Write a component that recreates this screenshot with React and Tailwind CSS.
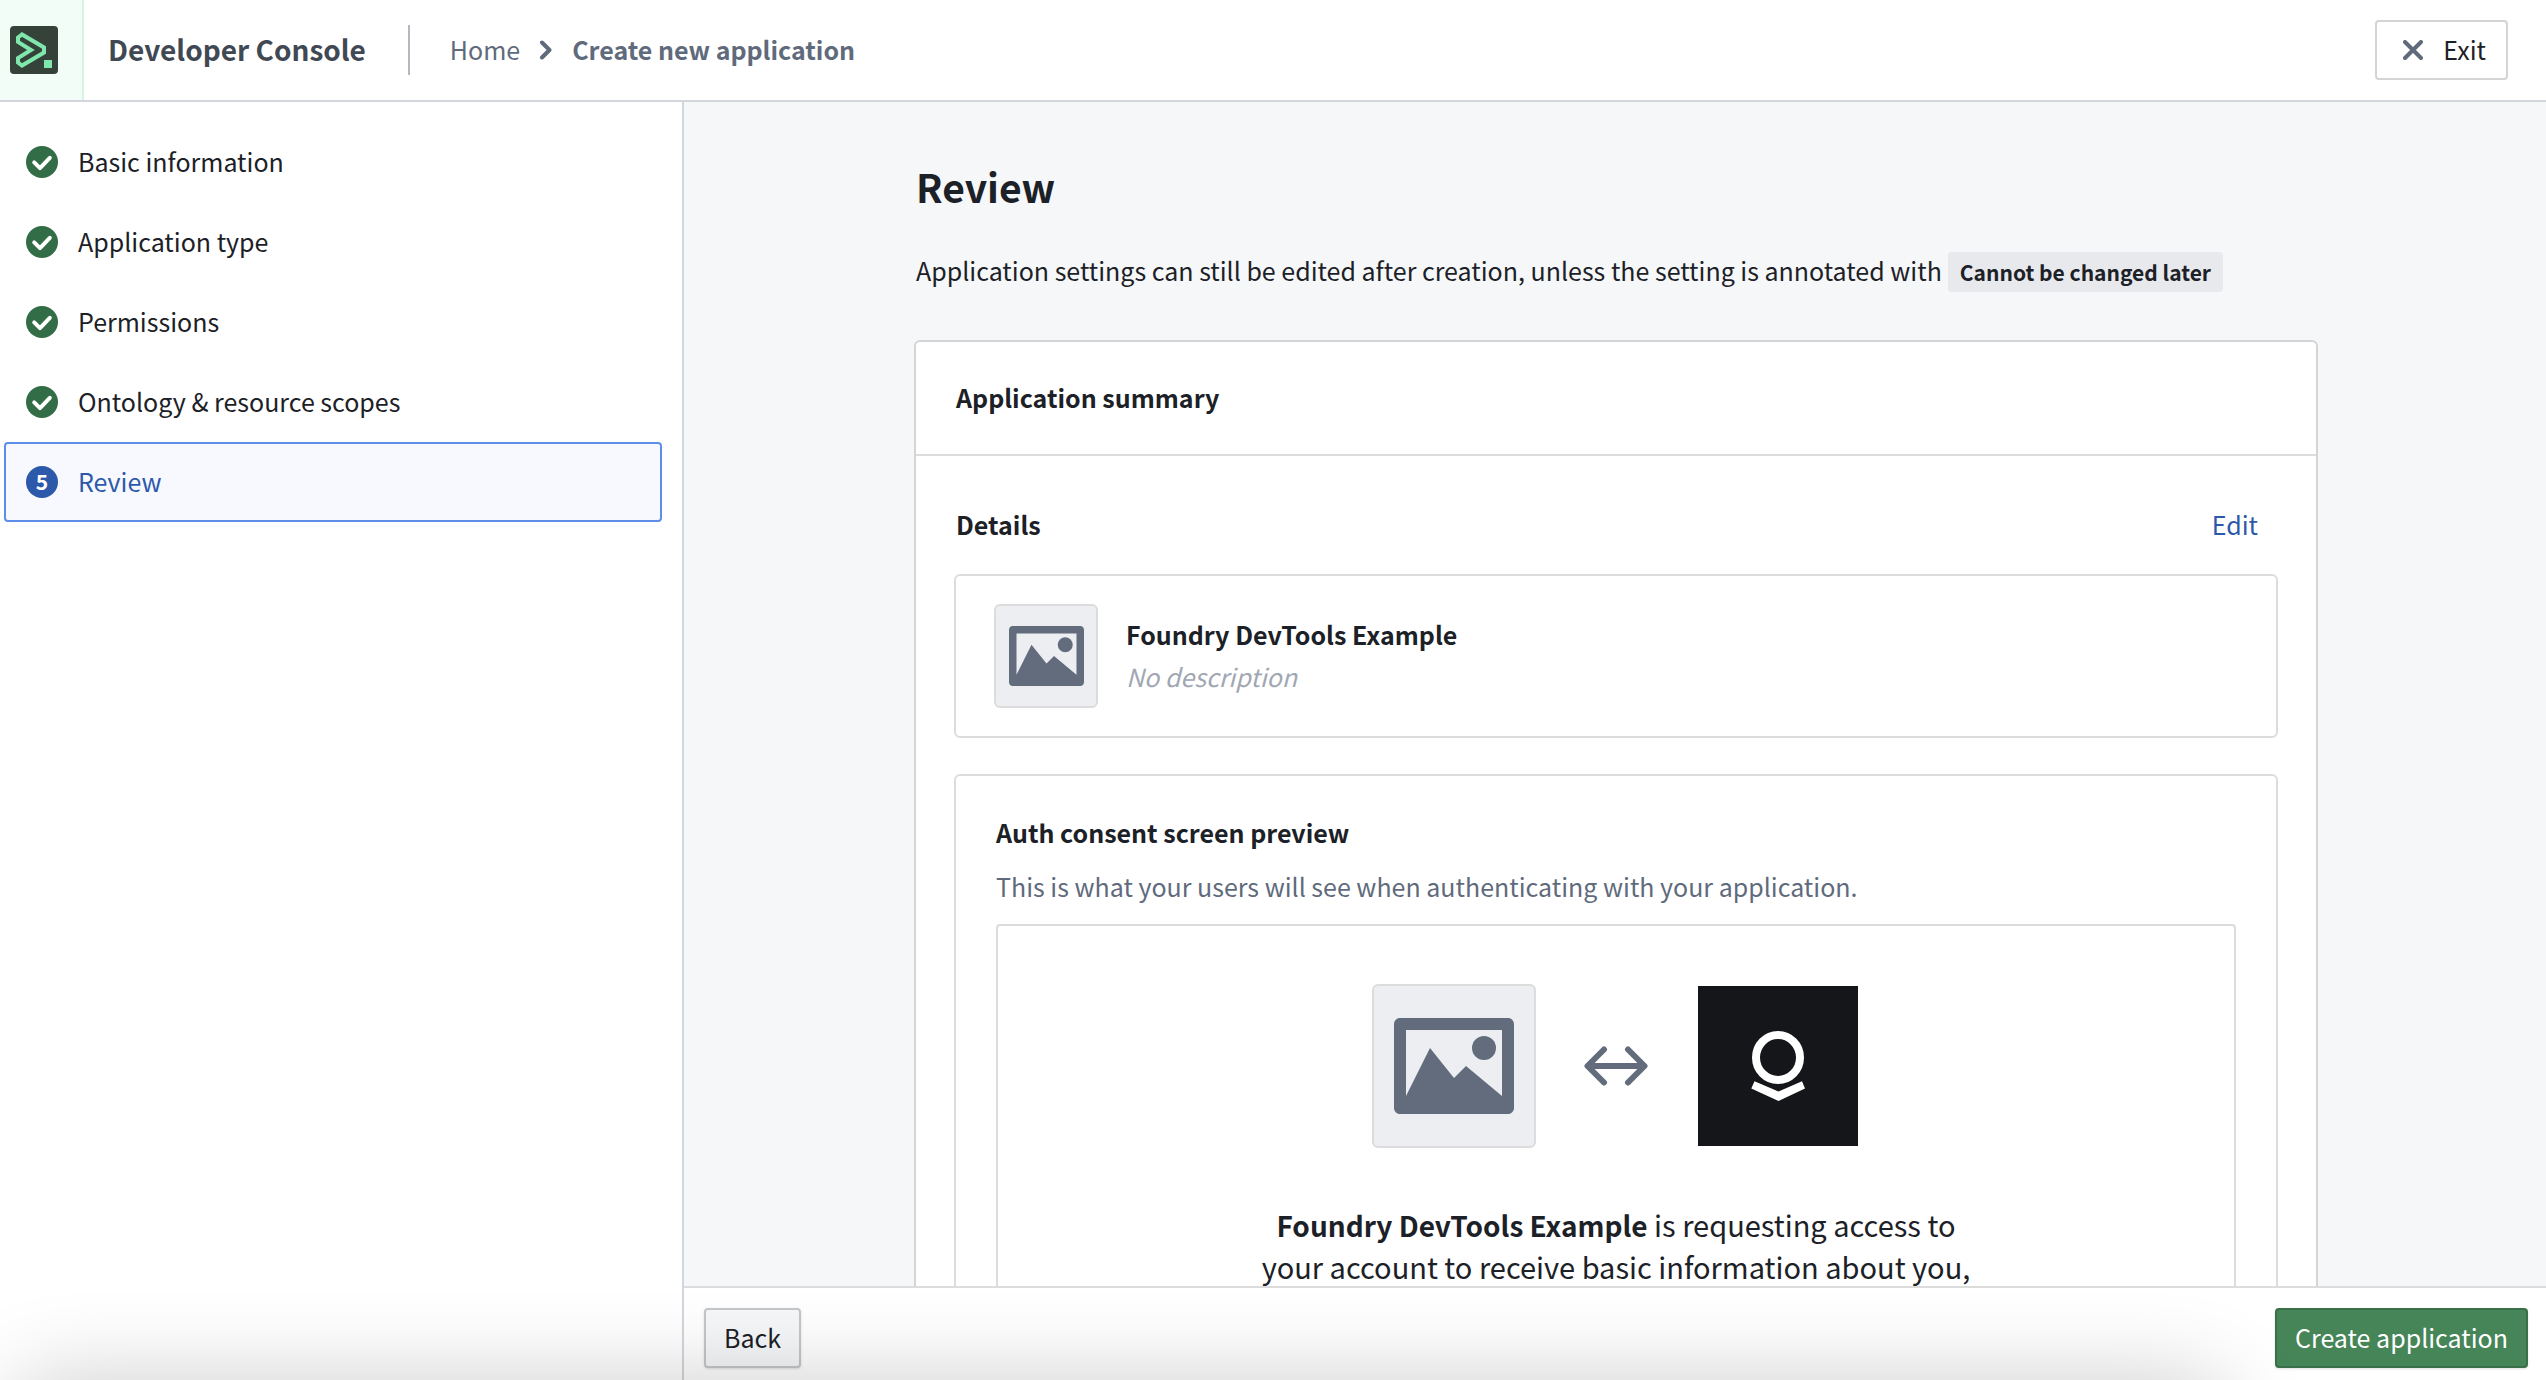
const steps = [
  { label: "Basic information", done: true },
  { label: "Application type", done: true },
  { label: "Permissions", done: true },
  { label: "Ontology & resource scopes", done: true },
  { label: "Review", done: false },
];

function ConsoleLogo() {
  return (
    <svg viewBox="0 0 48 48" className="size-12" aria-hidden="true">
      <rect width="48" height="48" rx="4" fill="#354239" />
      <path d="M8 11.500L12 8.500L34 21.500V26.500L12 39.500L8 36.500V32L21 24L8 16z" fill="none" stroke="#7fe7ac" strokeWidth="4" />
      <rect x="34" y="34" width="8" height="8" fill="#7fe7ac" />
    </svg>
  );
}

function DoneIcon() {
  return (
    <svg viewBox="0 0 16 16" className="size-8 shrink-0" aria-hidden="true">
      <circle cx="8" cy="8" r="8" fill="#336d47" />
      <path d="M4.100 8.200L7 11.100L11.900 5.900" fill="none" stroke="#fff" strokeWidth="2" strokeLinecap="round" strokeLinejoin="round" />
    </svg>
  );
}

function MediaIcon({ className }) {
  return (
    <svg viewBox="0 0 20 16" className={className} fill="#626c7c" aria-hidden="true">
      <path fillRule="evenodd" d="M1 0h18c.55 0 1 .45 1 1v14c0 .55-.45 1-1 1H1c-.55 0-1-.45-1-1V1c0-.55.45-1 1-1zM2 2v11L6 5l4 5 2-2 6 5V2z" />
      <circle cx="15" cy="5" r="2" />
    </svg>
  );
}

function ArrowsIcon() {
  return (
    <svg viewBox="0 0 64 40" className="h-10 w-16" fill="none" stroke="#626c7c" strokeWidth="6" strokeLinecap="round" strokeLinejoin="round" aria-hidden="true">
      <path d="M4 20h56M20 3.500L3.500 20L20 36.500M44 3.500L60.500 20L44 36.500" />
    </svg>
  );
}

function CompanyLogo() {
  return (
    <svg viewBox="0 0 160 160" className="m-0.5 size-40" aria-hidden="true">
      <rect width="160" height="160" fill="#14161a" />
      <ellipse cx="80" cy="71.500" rx="22" ry="22.500" fill="none" stroke="#fff" strokeWidth="8" />
      <path d="M56.500 95.300L80.500 105.500L104 95.300L107 102.500L80.500 115L53.300 102.500z" fill="#fff" />
    </svg>
  );
}

export default function App() {
  return (
    <div className="relative flex h-screen flex-col overflow-hidden bg-white font-['Noto_Sans_CJK_SC','Noto_Sans',sans-serif] text-[25px] leading-9 text-[#1c2127]">
      <header className="flex h-[102px] shrink-0 items-center border-b-2 border-[#d3d6dc]">
        <a href="#home" aria-label="Developer Console home" className="flex h-full w-[84px] items-center border-r-2 border-[#d5f4e2] bg-[#f2fdf7] pl-2.5">
          <ConsoleLogo />
        </a>
        <div className="ml-6 pb-0.5 text-[28px] font-semibold text-[#404854]">Developer Console</div>
        <div className="ml-[42px] h-[50px] w-0.5 bg-[#b3b7be]" />
        <nav aria-label="Breadcrumb" className="ml-10 flex items-center text-[#5f6b7c]">
          <a href="#home" className="pb-0.5">Home</a>
          <svg viewBox="0 0 14 20" className="mx-[19px] h-5 w-3.5" fill="none" stroke="#5f6b7c" strokeWidth="4" strokeLinecap="round" strokeLinejoin="round" aria-hidden="true">
            <path d="M3 2.500L10.500 10L3 17.500" />
          </svg>
          <span className="pb-0.5 font-semibold">Create new application</span>
        </nav>
        <button className="mr-[38px] ml-auto flex h-[60px] items-center gap-5 rounded border-2 border-[#d3d4d6] pr-5 pl-[26px]">
          <svg viewBox="0 0 20 20" className="size-5" stroke="#5f6b7c" strokeWidth="4" strokeLinecap="round" aria-hidden="true">
            <path d="M2 2L18 18M18 2L2 18" />
          </svg>
          <span className="pb-0.5">Exit</span>
        </button>
      </header>

      <div className="flex min-h-0 flex-1">
        <aside className="w-[684px] shrink-0 border-r-2 border-[#d3d6dc] pt-5 pr-5 pl-1">
          <ol>
            {steps.map((step, i) => (
              <li key={step.label}>
                <button
                  aria-current={step.done ? undefined : "step"}
                  className={
                    step.done
                      ? "flex h-20 w-full items-center gap-5 rounded border-2 border-transparent px-5 text-left"
                      : "flex h-20 w-full items-center gap-5 rounded border-2 border-[#5c8ee9] bg-[#f8f9fe] px-5 text-left text-[#2d59aa]"
                  }
                >
                  {step.done ? (
                    <DoneIcon />
                  ) : (
                    <span className="flex size-8 items-center justify-center rounded-full bg-[#2d59aa] pb-0.5 text-[21px] font-semibold text-white">{i + 1}</span>
                  )}
                  <span className="pb-0.5">{step.label}</span>
                </button>
              </li>
            ))}
          </ol>
        </aside>

        <div className="flex min-w-0 flex-1 flex-col">
          <main className="min-h-0 flex-1 overflow-hidden bg-[#f6f7f9] pl-0.5">
            <div className="mx-auto w-full max-w-[1404px] pt-[58px]">
              <h1 className="pl-0.5 text-[39px] leading-[52px] font-semibold">Review</h1>
              <div className="mt-10 flex h-10 items-center gap-1.5 pl-0.5">
                <p className="pb-1 whitespace-nowrap">Application settings can still be edited after creation, unless the setting is annotated with</p>
                <span className="flex h-10 items-center rounded bg-[#e8e9ed] px-3 text-[21px] font-semibold whitespace-nowrap">Cannot be changed later</span>
              </div>

              <section className="mt-12 rounded-md border-2 border-[#d3d4d8] bg-white">
                <h2 className="flex h-[114px] items-center border-b-2 border-[#dcdcdd] px-10 pb-0.5 font-semibold">Application summary</h2>
                <div className="px-[38px] pt-[50px]">
                  <div className="flex items-center justify-between pr-5">
                    <h3 className="pl-0.5 font-semibold">Details</h3>
                    <a href="#edit" className="text-[#2d59aa]">Edit</a>
                  </div>

                  <div className="mt-8 flex items-center gap-7 rounded-md border-2 border-[#dcdcdd] px-[38px] py-7">
                    <div className="flex size-[104px] items-center justify-center rounded-md border-2 border-[#dcdcdd] bg-[#edeef2]">
                      <MediaIcon className="h-[60px] w-[75px]" />
                    </div>
                    <div className="pb-0.5">
                      <div className="leading-[42px] font-semibold">Foundry DevTools Example</div>
                      <div className="leading-[42px] text-[#a0a7b2] italic">No description</div>
                    </div>
                  </div>

                  <div className="mt-9 rounded-md border-2 border-[#dcdcdd] px-10 pt-[38px]">
                    <h3 className="font-semibold">Auth consent screen preview</h3>
                    <p className="mt-[18px] text-[#5f6b7c]">This is what your users will see when authenticating with your application.</p>
                    <div className="mt-5 rounded-t border-2 border-[#dcdcdd] pt-[58px] pb-16">
                      <div className="flex items-center justify-center gap-12">
                        <div className="flex size-[164px] items-center justify-center rounded-md border-2 border-[#dcdcdd] bg-[#edeef2]">
                          <MediaIcon className="h-24 w-[120px]" />
                        </div>
                        <ArrowsIcon />
                        <CompanyLogo />
                      </div>
                      <p className="mt-14 text-center text-[29px] leading-[41px]">
                        <strong className="text-[28px] font-semibold">Foundry DevTools Example</strong> is requesting access to
                        <br />
                        your account to receive basic information about you,
                      </p>
                    </div>
                  </div>
                </div>
              </section>
            </div>
          </main>

          <footer className="flex h-[94px] shrink-0 items-start justify-between border-t-2 border-[#dcdcdd] pt-5 pr-[18px] pl-5">
            <button className="h-[60px] rounded border-2 border-[#c5c6c8] bg-[#f6f7f9] px-[18px] pb-0.5 shadow-sm">Back</button>
            <button className="h-[60px] rounded border-2 border-[#3a7049] bg-[#458557] px-[18px] pb-0.5 text-white shadow-sm">Create application</button>
          </footer>
        </div>
      </div>

      {/* Soft shadow rising from below the window edge */}
      <div className="pointer-events-none absolute right-[326px] -bottom-40 left-5 h-40 shadow-[0_0_90px_rgba(0,0,0,0.2)]" />
    </div>
  );
}
